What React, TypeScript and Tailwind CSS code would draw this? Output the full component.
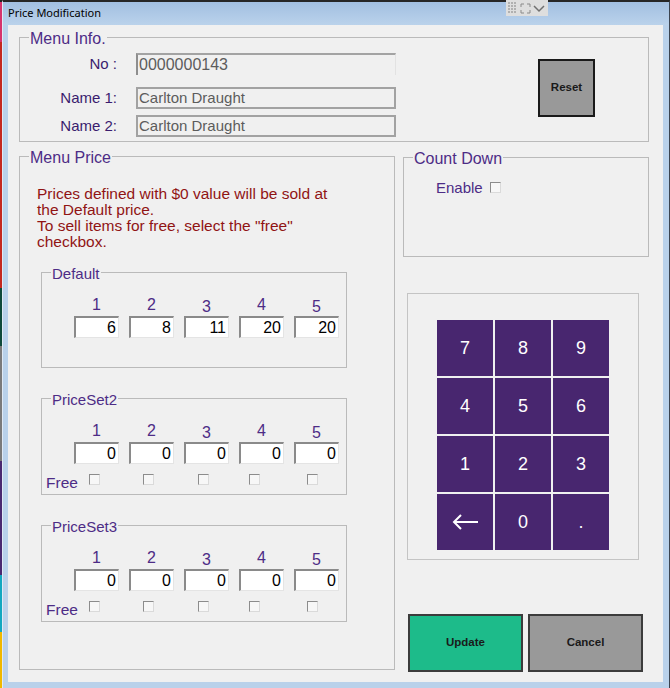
import type { ReactNode } from "react";

const FONT = { fontFamily: '"Liberation Sans", Arial, sans-serif' };

const desktop = [
  { h: 40, c: "bg-[#d6336c]" },
  { h: 247, c: "bg-[#c4281f]" },
  { h: 58, c: "bg-[#0f4a3a]" },
  { h: 115, c: "bg-[#7a7a7a]" },
  { h: 115, c: "bg-[#4a2870]" },
  { h: 57, c: "bg-[#12a8c0]" },
  { h: 56, c: "bg-[#f0b800]" },
];

function GroupBox({
  label,
  className,
  labelSize = "text-[16px] leading-[18px]",
  children,
}: {
  label: string;
  className?: string;
  labelSize?: string;
  children?: ReactNode;
}) {
  return (
    <div className={`relative border border-[#bababa] ${className ?? ""}`}>
      <span
        className={`absolute -top-[8px] left-[9px] px-[1px] bg-[#f0f0f0] text-[#4d2c86] whitespace-nowrap ${labelSize}`}
      >
        {label}
      </span>
      {children}
    </div>
  );
}

function CheckBox() {
  return (
    <div className="w-[11px] h-[11px] bg-[#f7f7f7] border border-t-[#8c8c8c] border-l-[#8c8c8c] border-r-[#dadada] border-b-[#dadada]" />
  );
}

function PriceInput({ value }: { value: string }) {
  return (
    <div className="w-[45px] h-[22px] bg-white border-t-2 border-l-2 border-t-[#8a8a8a] border-l-[#8a8a8a] border-r border-b border-r-[#e4e4e4] border-b-[#e4e4e4] flex items-center justify-end pr-[2px] text-[16px] leading-[18px] text-black">
      {value}
    </div>
  );
}

function PriceSet({ label, values, free }: { label: string; values: string[]; free?: boolean }) {
  const checkOffsets = ["ml-[15px]", "ml-[14px]", "ml-[14px]", "ml-[10px]", "ml-[13px]"];
  return (
    <GroupBox
      label={label}
      labelSize="text-[15px] leading-[17px]"
      className={`w-[306px] ${free ? "h-[97px]" : "h-[96px]"}`}
    >
      <div className="pt-[23px] pl-[32px] flex gap-[10px]">
        {values.map((v, i) => (
          <div key={i} className="w-[45px] flex flex-col items-center">
            <span
              className={`text-[16px] leading-[18px] text-[#4d2c86] ${i === 2 || i === 4 ? "mt-[2px] -mb-[2px]" : ""}`}
            >
              {i + 1}
            </span>
            <div className="mt-[2px]">
              <PriceInput value={v} />
            </div>
          </div>
        ))}
      </div>
      {free && (
        <div className="flex pl-[4px] mt-[9px]">
          <span className="w-[28px] whitespace-nowrap text-[15.5px] leading-[19px] text-[#4d2c86]">Free</span>
          <div className="flex gap-[10px]">
            {checkOffsets.map((m, i) => (
              <div key={i} className="w-[45px] pt-[1px]">
                <div className={m}>
                  <CheckBox />
                </div>
              </div>
            ))}
          </div>
        </div>
      )}
    </GroupBox>
  );
}

function Field({ label, value, sunken }: { label: string; value: string; sunken?: boolean }) {
  return (
    <div className="flex items-center">
      <span className="w-[97px] text-right text-[15px] leading-[18px] text-[#3a1c6e]">{label}</span>
      <div
        className={`ml-[19px] w-[260px] h-[22px] flex items-center pl-[1px] text-[#5c5c5c] ${
          sunken
            ? "border-t-2 border-l-2 border-t-[#a3a3a3] border-l-[#8e8e8e] border-r border-r-[#e2e2e2] text-[16px]"
            : "border-2 border-[#a2a2a2] text-[15px]"
        }`}
      >
        {value}
      </div>
    </div>
  );
}

function Key({ children }: { children: ReactNode }) {
  return (
    <button className="w-[56px] h-[56px] bg-[#48266f] text-white text-[18px] flex items-center justify-center">
      {children}
    </button>
  );
}

export default function App() {
  const keys = ["7", "8", "9", "4", "5", "6", "1", "2", "3"];
  return (
    <div className="w-[670px] h-[688px] flex overflow-hidden bg-[#222]" style={FONT}>
      <div className="w-[2px] flex flex-col">
        <div className="h-[2px] bg-[#222]" />
        {desktop.map((d, i) => (
          <div key={i} className={d.c} style={{ height: d.h }} />
        ))}
      </div>

      <div className="relative flex-1 flex flex-col bg-[#b9d1ea] border-t-2 border-t-[#262626] border-l border-l-[#dfe9f5] border-r border-r-[#3b4450]">
        {/* title bar */}
        <div className="h-[23px] flex items-center pl-[5px] bg-linear-to-b from-[#a2bfe1] to-[#bad2eb]">
          <span className="text-[11px] text-black" style={{ fontFamily: '"Noto Sans", "Liberation Sans", sans-serif' }}>
            Price Modification
          </span>
        </div>
        <div className="absolute -top-[2px] left-[503px] w-[42px] h-[16px] bg-[#dedede] flex items-center gap-[2px] px-[2px]">
          <svg width="10" height="12" viewBox="0 0 10 12" fill="#b0b0b0">
            {[0, 3, 6, 9].map((y) => [0, 3, 6].map((x) => <rect key={`${x}-${y}`} x={x} y={y} width="2" height="2" />))}
          </svg>
          <svg width="11" height="11" viewBox="0 0 11 11" fill="none" stroke="#8a8a8a" strokeWidth="1">
            <path d="M1 4V1h3M7 1h3v3M10 7v3H7M4 10H1V7" />
          </svg>
          <svg width="12" height="10" viewBox="0 0 12 10" fill="none" stroke="#707070" strokeWidth="1.5">
            <path d="M1 3l5 5 5-5" />
          </svg>
        </div>

        {/* client area */}
        <div className="ml-[5px] mr-[6px] h-[657px] bg-[#f0f0f0] pl-[11px] pt-[12px]">
          <GroupBox label="Menu Info." className="w-[630px] h-[105px]">
            <div className="flex items-start">
              <div className="flex flex-col pt-[15px]">
                <Field label="No :" value="0000000143" sunken />
                <div className="mt-[12px]">
                  <Field label="Name 1:" value="Carlton Draught" />
                </div>
                <div className="mt-[6px]">
                  <Field label="Name 2:" value="Carlton Draught" />
                </div>
              </div>
              <button className="ml-auto mr-[53px] mt-[21px] w-[57px] h-[58px] bg-[#999999] border-2 border-[#1a1a1a] text-[11.5px] font-bold text-[#1a1a1a]">
                Reset
              </button>
            </div>
          </GroupBox>

          <div className="flex mt-[14px] gap-[8px]">
            <GroupBox label="Menu Price" className="w-[376px] h-[514px]">
              <p className="pl-[17px] pt-[29px] text-[15.5px] leading-[16px] text-[#901414]">
                Prices defined with $0 value will be sold at
                <br />
                the Default price.
                <br />
                To sell items for free, select the "free"
                <br />
                checkbox.
              </p>
              <div className="ml-[21px] mt-[22px] flex flex-col gap-[30px]">
                <PriceSet label="Default" values={["6", "8", "11", "20", "20"]} />
                <PriceSet label="PriceSet2" values={["0", "0", "0", "0", "0"]} free />
                <PriceSet label="PriceSet3" values={["0", "0", "0", "0", "0"]} free />
              </div>
            </GroupBox>

            <div className="flex flex-col mt-[1px]">
              <GroupBox label="Count Down" className="w-[246px] h-[100px]">
                <div className="flex items-center pl-[32px] pt-[21px]">
                  <span className="text-[15px] leading-[18px] text-[#4d2c86]">Enable</span>
                  <div className="ml-[7px] -mt-[2px]">
                    <CheckBox />
                  </div>
                </div>
              </GroupBox>

              <div className="ml-[4px] mt-[36px] w-[232px] h-[267px] border border-[#c4c4c4] pl-[29px] pt-[26px]">
                <div className="grid grid-cols-[56px_56px_56px] gap-[2px]">
                  {keys.map((k) => (
                    <Key key={k}>{k}</Key>
                  ))}
                  <Key>
                    <svg width="28" height="16" viewBox="0 0 28 16" fill="none" stroke="white" strokeWidth="2">
                      <path d="M3 8h24M10 1L3 8l7 7" />
                    </svg>
                  </Key>
                  <Key>0</Key>
                  <Key>.</Key>
                </div>
              </div>

              <div className="ml-[5px] mt-[54px] flex gap-[5px]">
                <button className="w-[115px] h-[58px] bg-[#1dbb8a] border-2 border-[#3c3c3c] text-[11.5px] font-bold text-[#1a1a1a]">
                  Update
                </button>
                <button className="w-[115px] h-[58px] bg-[#999999] border-2 border-[#3c3c3c] text-[11.5px] font-bold text-[#1a1a1a]">
                  Cancel
                </button>
              </div>
            </div>
          </div>
        </div>
      </div>
    </div>
  );
}
